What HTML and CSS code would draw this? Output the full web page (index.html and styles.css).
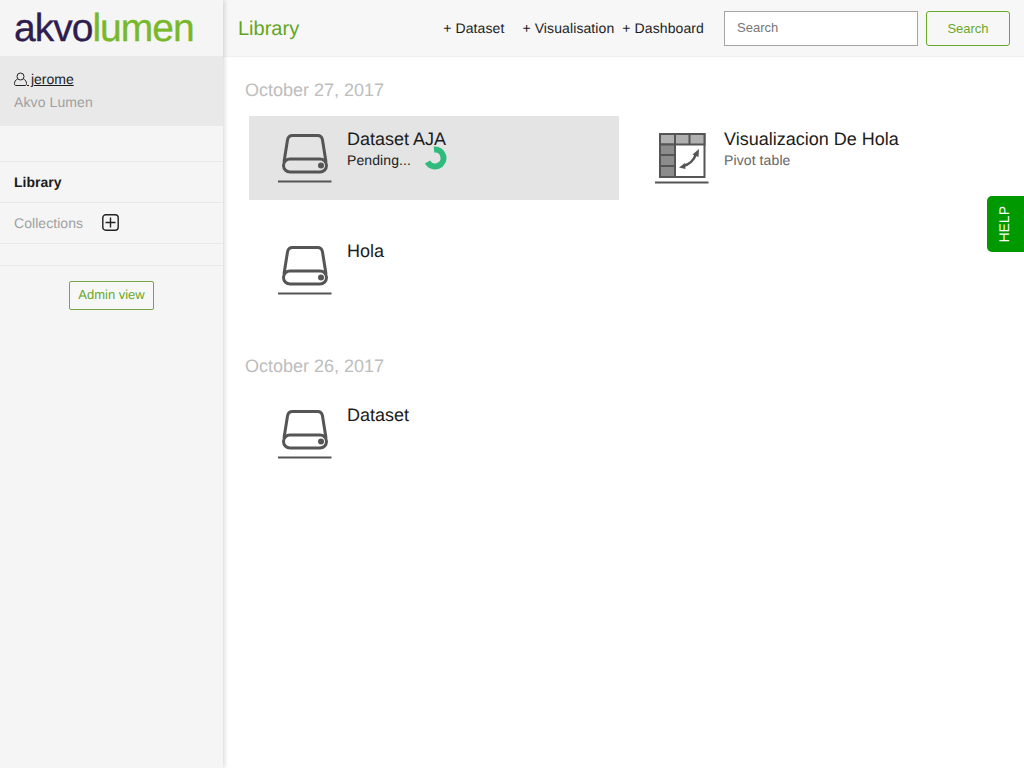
FILE: index.html
```html
<!DOCTYPE html>
<html lang="en">
<head>
    <meta charset="UTF-8">
    <meta name="viewport" content="width=device-width, initial-scale=1.0">
    <title>Akvo Lumen</title>
    <link rel="stylesheet" href="styles.css">
</head>
<body>
    <div class="app">
        <aside class="sidebar">
            <div class="logo"><span class="logo-text"><span class="logo-dark">akvo</span><span class="logo-green">lumen</span></span></div>
            <div class="user-box">
                <a class="user-name" href="#"><svg class="user-icon" width="13" height="14" viewBox="0 0 13 14" fill="none" stroke="#222" stroke-width="1"><circle cx="6.5" cy="4.5" r="3.5"/><path d="M3.5 7C1.5 8 .5 9.5 .5 11.5C.5 13 1 13.5 2 13.5H11C12 13.5 12.5 13 12.5 11.5C12.5 9.5 11.5 8 9.5 7"/></svg> jerome</a>
                <div class="org-name">Akvo Lumen</div>
            </div>
            <nav class="side-nav">
                <div class="nav-row nav-active">Library</div>
                <div class="nav-row nav-collections">
                    <span>Collections</span>
                    <svg width="17" height="17" viewBox="0 0 17 17" fill="none" stroke="#222" stroke-width="1.4"><rect x=".8" y=".8" width="15.4" height="15.4" rx="3"/><path d="M8.5 3.5V13.5M3.5 8.5H13.5"/></svg>
                </div>
                <div class="nav-row nav-empty"></div>
            </nav>
            <div class="admin-wrap"><a class="admin-btn" href="#">Admin view</a></div>
        </aside>
        <main class="main">
            <header class="topbar">
                <h1>Library</h1>
                <div class="create-links">
                    <a class="link-dataset" href="#">+ Dataset</a>
                    <a class="link-vis" href="#">+ Visualisation</a>
                    <a href="#">+ Dashboard</a>
                </div>
                <form class="search-form">
                    <input type="text" class="search-input" placeholder="Search">
                    <button type="button" class="search-btn">Search</button>
                </form>
            </header>
            <section class="library">
                <h2 class="date-title">October 27, 2017</h2>
                <ul class="item-grid">
                    <li class="item item-pending">
                        <svg class="item-icon" width="54" height="50" viewBox="0 0 54 50" fill="none" stroke="#555" stroke-width="3"><path d="M6 28L9.5 6C10 3 11.5 1.5 14.5 1.5H39.5C42.5 1.5 44 3 44.5 6L48 28"/><rect x="5.5" y="25" width="43" height="13" rx="6.5"/><circle cx="43" cy="31.5" r="3" fill="#555" stroke="none"/><path d="M0 47.5H53.5" stroke-width="2"/></svg>
                        <div class="item-text">
                            <h3>Dataset AJA</h3>
                            <div class="pending-row">
                                <span>Pending...</span>
                                <svg class="spinner" width="24" height="24" viewBox="0 0 24 24" fill="none" stroke="#2fbb7c" stroke-width="6"><path d="M11 3.5A8.5 8.5 0 1 1 4.5 16"/></svg>
                            </div>
                        </div>
                    </li>
                    <li class="item">
                        <svg class="item-icon icon-table" width="54" height="50" viewBox="0 0 54 50" fill="none" stroke="#555" stroke-width="2"><path d="M5 0H49.5V43H5Z" fill="#fff"/><path d="M5 0H49.5V10.5H5Z" fill="#b0b0b0"/><path d="M5 10.5H20V43H5Z" fill="#8c8c8c"/><path d="M20 0V10.5M34.5 0V10.5M5 21H20M5 32H20"/><path d="M28 32C34 31 39 26 41 20" stroke-width="2.5"/><path d="M24 33.5L30 29L30.5 35ZM44 15L37.500 20.5L43.5 23Z" fill="#555" stroke="none"/><path d="M0 48.5H53.5" stroke-width="2"/></svg>
                        <div class="item-text">
                            <h3>Visualizacion De Hola</h3>
                            <div class="item-sub">Pivot table</div>
                        </div>
                    </li>
                    <li class="item">
                        <svg class="item-icon" width="54" height="50" viewBox="0 0 54 50" fill="none" stroke="#555" stroke-width="3"><path d="M6 28L9.5 6C10 3 11.5 1.5 14.5 1.5H39.5C42.5 1.5 44 3 44.5 6L48 28"/><rect x="5.5" y="25" width="43" height="13" rx="6.5"/><circle cx="43" cy="31.5" r="3" fill="#555" stroke="none"/><path d="M0 47.5H53.5" stroke-width="2"/></svg>
                        <div class="item-text"><h3>Hola</h3></div>
                    </li>
                </ul>
                <h2 class="date-title date-second">October 26, 2017</h2>
                <ul class="item-grid">
                    <li class="item">
                        <svg class="item-icon" width="54" height="50" viewBox="0 0 54 50" fill="none" stroke="#555" stroke-width="3"><path d="M6 28L9.5 6C10 3 11.5 1.5 14.5 1.5H39.5C42.5 1.5 44 3 44.5 6L48 28"/><rect x="5.5" y="25" width="43" height="13" rx="6.5"/><circle cx="43" cy="31.5" r="3" fill="#555" stroke="none"/><path d="M0 47.5H53.5" stroke-width="2"/></svg>
                        <div class="item-text"><h3>Dataset</h3></div>
                    </li>
                </ul>
            </section>
        </main>
        <a class="help-tab" href="#"><span>HELP</span></a>
    </div>
</body>
</html>
```

FILE: styles.css
```css
* {
    box-sizing: border-box;
}
body {
    font-family: "Liberation Sans", Arial, sans-serif;
    margin: 0;
    padding: 0;
    background-color: #fff;
    color: #1c1c1c;
    text-rendering: geometricPrecision;
}
a {
    text-decoration: none;
    color: inherit;
}
.app {
    display: flex;
    height: 768px;
    overflow: hidden;
}

/* sidebar */
.sidebar {
    width: 223px;
    flex-shrink: 0;
    background-color: #f5f5f5;
    box-shadow: 1px 0 5px rgba(0, 0, 0, 0.18);
    z-index: 2;
}
.logo {
    height: 56px;
    padding: 8px 0 0 14px;
}
.logo-text {
    display: inline-block;
    font-size: 39px;
    line-height: 42px;
    letter-spacing: -1px;
    -webkit-text-stroke: 0.3px;
}
.logo-dark {
    color: #2f1d4e;
}
.logo-green {
    color: #78b82a;
}
.user-box {
    height: 70px;
    background-color: #e9e9e9;
    padding: 14px 14px 0;
    font-size: 14px;
}
.user-name {
    display: block;
    height: 19px;
    line-height: 19px;
    text-decoration: underline;
}
.user-icon {
    vertical-align: -2px;
}
.org-name {
    margin-top: 4px;
    line-height: 19px;
    letter-spacing: 0.1px;
    color: #a0a0a0;
}
.side-nav {
    margin-top: 35px;
    border-top: 1px solid #e8e8e8;
    font-size: 14px;
}
.nav-row {
    height: 41px;
    padding-left: 14px;
    border-bottom: 1px solid #e8e8e8;
    display: flex;
    align-items: center;
}
.nav-active {
    font-weight: bold;
}
.nav-collections {
    color: #a0a0a0;
    gap: 19px;
    letter-spacing: 0.05px;
}
.nav-collections svg {
    margin-top: -1px;
}
.nav-empty {
    height: 22px;
}
.admin-wrap {
    display: flex;
    justify-content: center;
    padding-top: 15px;
}
.admin-btn {
    display: block;
    height: 29px;
    line-height: 26px;
    padding: 0 8px;
    font-size: 13px;
    color: #6aa82b;
    background-color: #f7f7f7;
    border: 1px solid #76a645;
    border-radius: 2px;
}

/* top bar */
.main {
    flex: 1;
}
.topbar {
    height: 57px;
    display: flex;
    align-items: center;
    background-color: #f7f7f7;
    border-bottom: 1px solid #f0f0f0;
    padding: 0 14px 0 15px;
}
.topbar h1 {
    margin: 2px 0 0;
    font-size: 20px;
    font-weight: normal;
    color: #62a520;
}
.create-links {
    margin-left: auto;
    display: flex;
    gap: 8px;
    font-size: 14px;
    letter-spacing: 0.1px;
}
.link-dataset {
    margin-right: 10px;
}
.search-form {
    display: flex;
    align-items: center;
    gap: 8px;
    margin-left: 20px;
}
.search-input {
    width: 194px;
    height: 35px;
    padding: 0 12px 2px;
    font-family: inherit;
    font-size: 13px;
    border: 1px solid #a5a5a5;
    background-color: #fff;
}
.search-input::placeholder {
    color: #777;
}
.search-btn {
    width: 84px;
    height: 35px;
    font-family: inherit;
    font-size: 13px;
    color: #6aa82b;
    background-color: #f7f7f7;
    border: 1px solid #6aa82b;
    border-radius: 3px;
}

/* library */
.library {
    padding: 22px 0 0 22px;
}
.date-title {
    margin: 0;
    height: 22px;
    line-height: 22px;
    font-size: 18px;
    font-weight: normal;
    color: #bdbdbd;
}
.date-second {
    margin-top: 43px;
}
.item-grid {
    list-style-type: none;
    margin: 15px 0 0;
    padding: 0 0 0 4px;
    display: grid;
    grid-template-columns: 370px 370px;
    column-gap: 7px;
    row-gap: 28px;
}
.item {
    height: 84px;
    padding: 18px 0 0 29px;
    display: flex;
    gap: 15px;
}
.item-pending {
    background-color: #e4e4e4;
}
.item-icon {
    flex-shrink: 0;
}
.icon-table {
    overflow: visible;
}
.item-text {
    margin-top: -6px;
}
.item-text h3 {
    margin: 0;
    font-size: 18px;
    line-height: 22px;
    font-weight: normal;
}
.item-sub {
    margin-top: 1px;
    font-size: 14px;
    line-height: 18px;
    letter-spacing: 0.1px;
    color: #666;
}
.pending-row {
    display: flex;
    align-items: center;
    gap: 12px;
    font-size: 14px;
    height: 18px;
    margin-top: 1px;
    letter-spacing: 0.1px;
}
.spinner {
    margin-top: -4px;
}
.help-tab {
    position: absolute;
    top: 196px;
    right: 0;
    width: 37px;
    height: 56px;
    padding-right: 4px;
    display: flex;
    align-items: center;
    justify-content: center;
    background-color: #009900;
    border-radius: 5px 0 0 5px;
    color: #fff;
    font-size: 14px;
    z-index: 3;
}
.help-tab span {
    writing-mode: vertical-rl;
    transform: rotate(180deg);
}
```
